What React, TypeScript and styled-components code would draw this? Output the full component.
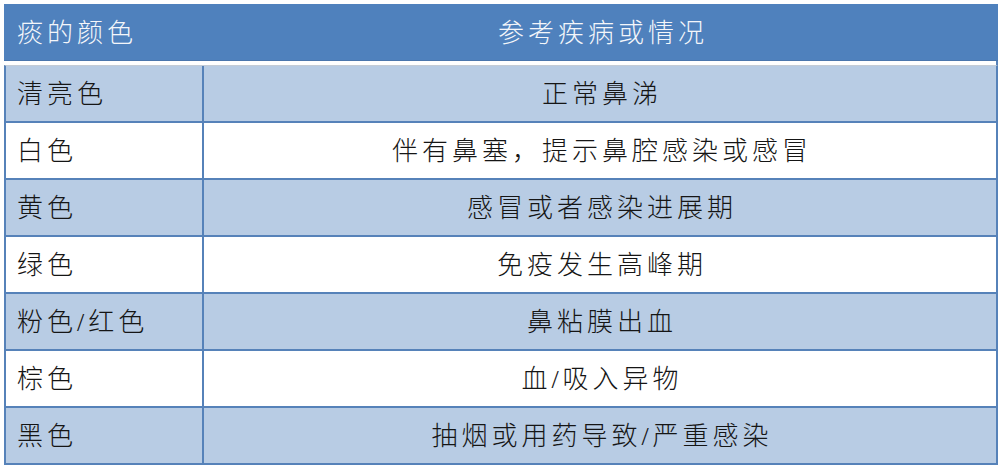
import styled, { createGlobalStyle } from 'styled-components';

const GlobalStyle = createGlobalStyle`
  html, body {
    margin: 0;
    padding: 0;
    background: #ffffff;
  }
  body {
    font-family: "Liberation Serif", "Noto Sans CJK SC", serif;
  }
`;

const colors = {
  header: '#4f81bd',
  headerEdge: '#4a76ad',
  light: '#b8cce4',
  border: '#5682b9',
  text: '#151515',
  headerText: '#f4f6fa',
};

const Page = styled.div`
  padding: 4px 0 0 4px;
`;

const Table = styled.div`
  width: 994px;
  display: flex;
  flex-direction: column;
`;

const HeaderRow = styled.div`
  display: grid;
  grid-template-columns: 200px 1fr;
  height: 56px;
  background: ${colors.header};
  border-bottom: 1px solid ${colors.headerEdge};
  color: ${colors.headerText};
`;

const Gap = styled.div`
  height: 4px;
  background: #ffffff;
  border-right: 2px solid ${colors.border};
`;

const Body = styled.div`
  display: flex;
  flex-direction: column;
  border-left: 2px solid ${colors.border};
  border-right: 2px solid ${colors.border};
  border-top: 1px solid #c4ccd6;
`;

const Row = styled.div<{ $shaded: boolean }>`
  display: grid;
  grid-template-columns: 198px 1fr;
  height: 55px;
  background: ${(p) => (p.$shaded ? colors.light : '#ffffff')};
  border-bottom: 2px solid ${colors.border};
  color: ${colors.text};
`;

const Cell = styled.div<{ $center?: boolean; $divider?: boolean }>`
  display: flex;
  align-items: center;
  justify-content: ${(p) => (p.$center ? 'center' : 'flex-start')};
  padding-left: ${(p) => (p.$center ? '4px' : '11px')};
  padding-bottom: 4px;
  font-size: 26px;
  letter-spacing: 4px;
  font-weight: 300;
  white-space: nowrap;
  border-right: ${(p) => (p.$divider ? `2px solid ${colors.border}` : 'none')};
`;

const HeadCell = styled(Cell)`
  padding-left: ${(p) => (p.$center ? '4px' : '13px')};
  padding-bottom: 4px;
`;

const rows: [string, string][] = [
  ['清亮色', '正常鼻涕'],
  ['白色', '伴有鼻塞，提示鼻腔感染或感冒'],
  ['黄色', '感冒或者感染进展期'],
  ['绿色', '免疫发生高峰期'],
  ['粉色/红色', '鼻粘膜出血'],
  ['棕色', '血/吸入异物'],
  ['黑色', '抽烟或用药导致/严重感染'],
];

export default function App() {
  return (
    <Page>
      <GlobalStyle />
      <Table>
        <HeaderRow>
          <HeadCell>痰的颜色</HeadCell>
          <HeadCell $center>参考疾病或情况</HeadCell>
        </HeaderRow>
        <Gap />
        <Body>
          {rows.map(([color, meaning], i) => (
            <Row key={color} $shaded={i % 2 === 0}>
              <Cell $divider>{color}</Cell>
              <Cell $center>{meaning}</Cell>
            </Row>
          ))}
        </Body>
      </Table>
    </Page>
  );
}
